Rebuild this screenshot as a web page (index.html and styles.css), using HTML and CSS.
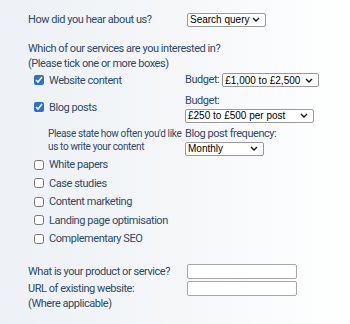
FILE: index.html
```html
<html>
<head>
    <title>Enquiry</title>
    <link rel="stylesheet" href="styles.css">
</head>
<body>
    <form class="enquiry" onsubmit="return false;">
        <div class="row first">
            <div class="label">How did you hear about us?</div>
            <div class="field">
                <select class="pick pick-source">
                    <option>Search query</option>
                    <option>Recommendation</option>
                    <option>Social media</option>
                </select>
            </div>
        </div>

        <div class="intro">
            Which of our services are you interested in?<br>
            (Please tick one or more boxes)
        </div>

        <div class="row service-row">
            <label class="tick"><input type="checkbox" checked> Website content</label>
            <div class="field inline">
                <span class="small-label">Budget:</span>
                <select class="pick pick-budget">
                    <option>£1,000 to £2,500</option>
                </select>
            </div>
        </div>

        <div class="row service-row">
            <label class="tick"><input type="checkbox" checked> Blog posts</label>
            <div class="field stack">
                <span class="small-label">Budget:</span>
                <select class="pick pick-blog">
                    <option>£250 to £500 per post</option>
                </select>
            </div>
        </div>

        <div class="row service-row">
            <div class="note">Please state how often you'd like us to write your content</div>
            <div class="field stack">
                <span class="small-label">Blog post frequency:</span>
                <select class="pick pick-freq">
                    <option>Monthly</option>
                    <option>Weekly</option>
                </select>
            </div>
        </div>

        <div class="boxes">
            <label class="tick"><input type="checkbox"> White papers</label>
            <label class="tick"><input type="checkbox"> Case studies</label>
            <label class="tick"><input type="checkbox"> Content marketing</label>
            <label class="tick"><input type="checkbox"> Landing page optimisation</label>
            <label class="tick"><input type="checkbox"> Complementary SEO</label>
        </div>

        <div class="row text-row">
            <div class="label">What is your product or service?</div>
            <div class="field"><input type="text" class="box"></div>
        </div>
        <div class="row text-row top">
            <div class="label">URL of existing website:<br>(Where applicable)</div>
            <div class="field"><input type="text" class="box"></div>
        </div>
    </form>
</body>
</html>
```

FILE: styles.css
```css
body {
    margin: 0;
    background: linear-gradient(90deg, #edf1f5 0%, #f5f7f9 50%, #ffffff 100%);
    font-family: Roboto, "Liberation Sans", sans-serif;
    color: #2e4a68;
    font-size: 11px;
    letter-spacing: -0.45px;
}

.enquiry {
    padding: 12px 0 0 28px;
}

.row {
    display: flex;
    align-items: center;
}

.row > :first-child {
    width: 157px;
    flex: none;
}

.first {
    height: 15px;
    margin-bottom: 14px;
}

.intro {
    line-height: 15px;
}

.service-row {
    min-height: 16px;
}

.service-row + .service-row {
    margin-top: 2px;
}

.inline {
    display: flex;
    align-items: center;
    gap: 3px;
}

.stack {
    display: flex;
    flex-direction: column;
    align-items: flex-start;
}

.small-label {
    line-height: 16px;
}

.stack .small-label {
    line-height: 17px;
}

.tick {
    display: flex;
    align-items: center;
    height: 18.5px;
}

.tick input {
    width: 10px;
    height: 10px;
    margin: 0 5px 0 6px;
    accent-color: #2a6fdc;
}

.note {
    font-size: 10px;
    letter-spacing: -0.35px;
    line-height: 13px;
    padding-left: 20px;
    box-sizing: border-box;
}

.boxes {
    display: flex;
    flex-direction: column;
    margin-bottom: 15px;
}

.pick {
    appearance: none;
    font-family: "Liberation Sans", Arial, sans-serif;
    font-size: 10px;
    letter-spacing: 0;
    height: 14px;
    padding: 0 0 0 2px;
    color: #000;
    background: #fff url("data:image/svg+xml,%3Csvg xmlns='http://www.w3.org/2000/svg' width='8' height='5' viewBox='0 0 8 5'%3E%3Cpath d='M1 1l3 3 3-3' fill='none' stroke='%23111' stroke-width='1.4'/%3E%3C/svg%3E") no-repeat right 5px center;
    border: 1px solid #9a9a9a;
    border-radius: 2px;
    box-sizing: border-box;
}

.pick-source { width: 79px; margin-left: 2px; }
.pick-budget { width: 97px; }
.pick-blog { width: 129px; }
.pick-freq { width: 79px; }

.text-row {
    height: 16px;
    margin-bottom: 2px;
}

.text-row.top {
    align-items: flex-start;
    height: auto;
    line-height: 15px;
}

.box {
    width: 110px;
    height: 15px;
    margin: 0 0 0 2px;
    box-sizing: border-box;
    border: 1px solid #a8a8a8;
    border-radius: 2px;
    background: #fff;
}
```
